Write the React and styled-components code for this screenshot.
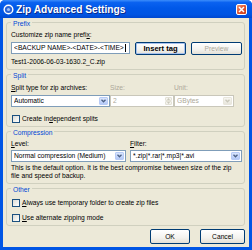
import React from "react"
import styled, { createGlobalStyle } from "styled-components"

const Global = createGlobalStyle`
    html, body {
        margin: 0;
        padding: 0;
        background: #ffffff;
    }
    body {
        font-family: "Liberation Sans", Arial, sans-serif;
        font-size: 6.7px;
        color: #000000;
    }
`

const Frame = styled.div`
    width: 252px;
    height: 250px;
    box-sizing: border-box;
    background: #0055e5;
    border-radius: 5px 5px 0 0;
    display: flex;
    flex-direction: column;
    overflow: hidden;
`

const TitleBar = styled.div`
    height: 18px;
    flex: none;
    display: flex;
    align-items: center;
    gap: 2px;
    padding: 0 5px 0 3px;
    background: linear-gradient(to bottom, #3b8dfb 0%, #0a62f0 14%, #0058e8 45%, #0055e3 80%, #0048cf 100%);
    .title {
        flex: 1;
        color: #ffffff;
        font-weight: bold;
        font-size: 10.2px;
        text-shadow: 1px 1px 0 #0a2a8a;
        white-space: nowrap;
    }
`

const CloseButton = styled.div`
    width: 11px;
    height: 11px;
    box-sizing: border-box;
    border: 1px solid #ffffff;
    border-radius: 2px;
    background: linear-gradient(135deg, #f09877 0%, #e2542e 50%, #c73c1a 100%);
    display: flex;
    align-items: center;
    justify-content: center;
`

const Body = styled.div`
    flex: 1;
    margin: 0 3px 3px 3px;
    background: #ece9d8;
    padding: 4px 4px 0 3px;
    display: flex;
    flex-direction: column;
    gap: 4px;
`

const Group = styled.div`
    position: relative;
    height: ${props => props.$h}px;
    box-sizing: border-box;
    border: 1px solid #d0d0bf;
    border-radius: 3px;
    padding: ${props => props.$pt}px 2px 0 4px;
    display: flex;
    flex-direction: column;
`

const Legend = styled.div`
    position: absolute;
    top: -3px;
    left: 4px;
    padding: 0 2px;
    line-height: 8px;
    background: #ece9d8;
    color: #0046d5;
`

const Text = styled.div`
    line-height: 8px;
    height: 8px;
    white-space: nowrap;
    margin-top: ${props => props.$mt || 0}px;
    color: ${props => props.$disabled ? "#aca899" : "#000000"};
    u {
        text-decoration: underline;
    }
`

const Row = styled.div`
    display: flex;
    align-items: flex-start;
    gap: ${props => props.$gap || 0}px;
    margin-top: ${props => props.$mt || 0}px;
`

const Grid = styled.div`
    display: grid;
    grid-template-columns: ${props => props.$cols};
    column-gap: ${props => props.$gap};
    row-gap: ${props => props.$rowgap || 0}px;
    margin-top: ${props => props.$mt || 0}px;
`

const Field = styled.div`
    width: ${props => props.$w ? `${props.$w}px` : "auto"};
    height: 12px;
    box-sizing: border-box;
    border: 1px solid ${props => props.$disabled ? "#c9c7ba" : "#7f9db9"};
    background: #ffffff;
    display: flex;
    align-items: center;
    padding: 0 1px 0 2px;
    line-height: 8px;
    color: ${props => props.$disabled ? "#aca899" : "#000000"};
    white-space: nowrap;
    overflow: hidden;
    .value {
        flex: 1;
        overflow: hidden;
    }
    .caret {
        display: inline-block;
        width: 1px;
        height: 8px;
        background: #000000;
        vertical-align: top;
        margin-left: 1px;
    }
`

const DropArrow = styled.div`
    width: 9px;
    height: 8px;
    flex: none;
    box-sizing: border-box;
    border-radius: 1px;
    border: 1px solid ${props => props.$disabled ? "#e8e6dc" : "#b8cbf6"};
    background: ${props => props.$disabled
        ? "linear-gradient(to bottom, #f7f6f1, #e8e6dc)"
        : "linear-gradient(to bottom, #d9e5fd, #b4c9f7)"};
    display: flex;
    align-items: center;
    justify-content: center;
`

const Spin = styled.div`
    width: 7px;
    height: 8px;
    flex: none;
    display: flex;
    flex-direction: column;
    span {
        flex: 1;
        border: 1px solid #e3e1d6;
        border-radius: 1px;
        background: #f4f3ee;
        display: flex;
        align-items: center;
        justify-content: center;
    }
`

const Button = styled.div`
    width: ${props => props.$w}px;
    height: ${props => props.$h || 13}px;
    box-sizing: border-box;
    border: 1px solid #003c74;
    border-radius: 2px;
    background: linear-gradient(to bottom, #ffffff 0%, #f3f2ee 60%, #e3e0d6 100%);
    box-shadow: ${props => props.$focus ? "inset 0 0 0 1px #a8c2ee" : "none"};
    display: flex;
    align-items: center;
    justify-content: center;
    line-height: 8px;
    font-size: ${props => props.$bold ? "7.6px" : "6.7px"};
    font-weight: ${props => props.$bold ? "bold" : "normal"};
    color: ${props => props.$disabled ? "#aca899" : "#000000"};
    white-space: nowrap;
`

const Check = styled.div`
    display: flex;
    align-items: center;
    gap: 2px;
    height: 9px;
    margin-left: 1px;
    margin-top: ${props => props.$mt || 0}px;
    line-height: 8px;
    white-space: nowrap;
    .box {
        width: 8px;
        height: 8px;
        box-sizing: border-box;
        border: 1px solid #1c5180;
        background: linear-gradient(135deg, #dcdcd7 0%, #f5f5f2 70%, #ffffff 100%);
    }
`

const Footer = styled.div`
    display: flex;
    justify-content: flex-end;
    gap: 10px;
    margin-top: -1px;
`

const Chevron = ({ color }) => (
    <svg width="5" height="4" viewBox="0 0 5 4">
        <path d="M0.5 0.8 L2.5 2.8 L4.5 0.8" fill="none" stroke={color} strokeWidth="1.3" />
    </svg>
)

const Select = ({ value, width, disabled }) => (
    <Field $w={width} $disabled={disabled}>
        <span className="value">{value}</span>
        <DropArrow $disabled={disabled}>
            <Chevron color={disabled ? "#c9c7ba" : "#4d6185"} />
        </DropArrow>
    </Field>
)

const AppIcon = () => (
    <svg width="11" height="11" viewBox="0 0 11 11">
        <circle cx="5.5" cy="5.5" r="5" fill="#ffffff" />
        <circle cx="5.5" cy="5.5" r="3.6" fill="#2a63d6" />
        <circle cx="5.5" cy="5.5" r="1.6" fill="#9cc0f5" />
    </svg>
)

export default function App() {
    return (
        <>
            <Global />
            <Frame>
                <TitleBar>
                    <AppIcon />
                    <span className="title">Zip Advanced Settings</span>
                    <CloseButton>
                        <svg width="7" height="7" viewBox="0 0 7 7">
                            <path d="M1 1 L6 6 M6 1 L1 6" stroke="#ffffff" strokeWidth="1.5" />
                        </svg>
                    </CloseButton>
                </TitleBar>
                <Body>
                    <Group $h={48} $pt={8}>
                        <Legend>Prefix</Legend>
                        <Text>Customize zip name prefi<u>x</u>:</Text>
                        <Row $mt={3} $gap={5}>
                            <Field $w={119}>
                                <span className="value">&lt;BACKUP NAME&gt;-&lt;DATE&gt;-&lt;TIME&gt;<span className="caret" /></span>
                            </Field>
                            <Button $w={51} $bold $focus>Insert tag</Button>
                            <Button $w={51} $disabled>Preview</Button>
                        </Row>
                        <Text $mt={3}>Test1-2006-06-03-1630.2_C.zip</Text>
                    </Group>

                    <Group $h={53} $pt={9}>
                        <Legend>Split</Legend>
                        <Grid $cols="99px 64px 60px" $gap="3px 5px" $rowgap={3}>
                            <Text><u>S</u>plit type for zip archives:</Text>
                            <Text $disabled>Size:</Text>
                            <Text $disabled>Unit:</Text>
                            <Select value="Automatic" />
                            <Field $disabled>
                                <span className="value">2</span>
                                <Spin>
                                    <span><svg width="3" height="2" viewBox="0 0 3 2"><path d="M0 2 L1.5 0 L3 2Z" fill="#c9c7ba" /></svg></span>
                                    <span><svg width="3" height="2" viewBox="0 0 3 2"><path d="M0 0 L1.5 2 L3 0Z" fill="#c9c7ba" /></svg></span>
                                </Spin>
                            </Field>
                            <Select value="GBytes" disabled />
                        </Grid>
                        <Check $mt={7}>
                            <span className="box" />
                            <span>Create in<u>d</u>ependent splits</span>
                        </Check>
                    </Group>

                    <Group $h={53} $pt={8}>
                        <Legend>Compression</Legend>
                        <Grid $cols="115px 1fr" $gap="4px" $rowgap={2}>
                            <Text><u>L</u>evel:</Text>
                            <Text><u>F</u>ilter:</Text>
                            <Select value="Normal compression (Medium)" />
                            <Select value="*.zip|*.rar|*.mp3|*.avi" />
                        </Grid>
                        <Text $mt={2}>This is the default option. It is the best compromise between size of the zip</Text>
                        <Text>file and speed of backup.</Text>
                    </Group>

                    <Group $h={38} $pt={9}>
                        <Legend>Other</Legend>
                        <Check>
                            <span className="box" />
                            <span><u>A</u>lways use temporary folder to create zip files</span>
                        </Check>
                        <Check $mt={6}>
                            <span className="box" />
                            <span><u>U</u>se alternate zipping mode</span>
                        </Check>
                    </Group>

                    <Footer>
                        <Button $w={40} $h={15}>OK</Button>
                        <Button $w={45} $h={15}>Cancel</Button>
                    </Footer>
                </Body>
            </Frame>
        </>
    )
}
